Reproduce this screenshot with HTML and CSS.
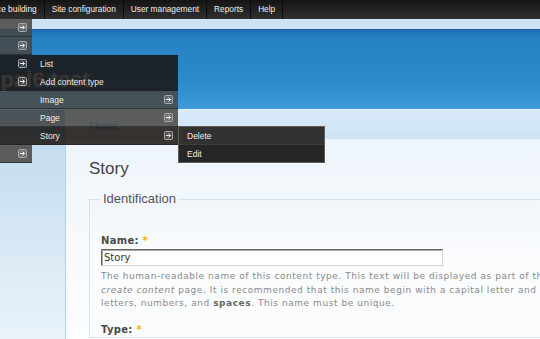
FILE: index.html
```html
<!DOCTYPE html>
<html>
<head>
  <title>Story | drupal6.test</title>
  <link rel="stylesheet" href="styles.css">
</head>
<body>
  <div class="admin-bar">
    <span class="admin-item first">ce building</span>
    <span class="admin-item">Site configuration</span>
    <span class="admin-item">User management</span>
    <span class="admin-item">Reports</span>
    <span class="admin-item">Help</span>
  </div>
  <div class="top-strip"></div>
  <div class="header">
    <h1 class="site-name">drupal6.test</h1>
  </div>

  <div class="main">
    <div class="sidebar"></div>
    <div class="center">
      <div class="breadcrumb"><a href="#">Home</a></div>
      <div class="content">
        <h2 class="title">Story</h2>
        <fieldset>
          <legend>Identification</legend>
          <div class="form-item">
            <label>Name: <span class="req">*</span></label>
            <input type="text" class="form-text" value="Story">
            <div class="description">
              The human-readable name of this content type. This text will be displayed as part of the list on the<br>
              <em>create content</em> page. It is recommended that this name begin with a capital letter and contain only<br>
              letters, numbers, and <strong>spaces</strong>. This name must be unique.
            </div>
          </div>
          <div class="form-item type-item">
            <label>Type: <span class="req">*</span></label>
          </div>
        </fieldset>
      </div>
    </div>
  </div>

  <ul class="menu menu-root">
    <li class="item"><span class="label"></span><svg class="arrow" width="9" height="9" viewBox="0 0 9 9"><rect x="0.5" y="0.5" width="8" height="8" rx="1"/><path d="M2 4.5h4.5M4.6 2.6l1.9 1.9-1.9 1.9"/></svg></li>
    <li class="item"><span class="label"></span><svg class="arrow" width="9" height="9" viewBox="0 0 9 9"><rect x="0.5" y="0.5" width="8" height="8" rx="1"/><path d="M2 4.5h4.5M4.6 2.6l1.9 1.9-1.9 1.9"/></svg></li>
    <li class="item dark"><span class="label"></span><svg class="arrow" width="9" height="9" viewBox="0 0 9 9"><rect x="0.5" y="0.5" width="8" height="8" rx="1"/><path d="M2 4.5h4.5M4.6 2.6l1.9 1.9-1.9 1.9"/></svg>
      <ul class="menu menu-sub">
        <li class="item dark"><span class="label">List</span></li>
        <li class="item dark"><span class="label">Add content type</span></li>
        <li class="item"><span class="label">Image</span><svg class="arrow" width="9" height="9" viewBox="0 0 9 9"><rect x="0.5" y="0.5" width="8" height="8" rx="1"/><path d="M2 4.5h4.5M4.6 2.6l1.9 1.9-1.9 1.9"/></svg></li>
        <li class="item"><span class="label">Page</span><svg class="arrow" width="9" height="9" viewBox="0 0 9 9"><rect x="0.5" y="0.5" width="8" height="8" rx="1"/><path d="M2 4.5h4.5M4.6 2.6l1.9 1.9-1.9 1.9"/></svg></li>
        <li class="item dark"><span class="label">Story</span><svg class="arrow" width="9" height="9" viewBox="0 0 9 9"><rect x="0.5" y="0.5" width="8" height="8" rx="1"/><path d="M2 4.5h4.5M4.6 2.6l1.9 1.9-1.9 1.9"/></svg>
          <ul class="menu menu-third">
            <li class="item"><span class="label">Delete</span></li>
            <li class="item"><span class="label">Edit</span></li>
          </ul>
        </li>
      </ul>
    </li>
    <li class="item dark"><span class="label"></span><svg class="arrow" width="9" height="9" viewBox="0 0 9 9"><rect x="0.5" y="0.5" width="8" height="8" rx="1"/><path d="M2 4.5h4.5M4.6 2.6l1.9 1.9-1.9 1.9"/></svg></li>
    <li class="item"><span class="label"></span></li>
    <li class="item"><span class="label"></span></li>
    <li class="item dark"><span class="label"></span></li>
    <li class="item"><span class="label"></span><svg class="arrow" width="9" height="9" viewBox="0 0 9 9"><rect x="0.5" y="0.5" width="8" height="8" rx="1"/><path d="M2 4.5h4.5M4.6 2.6l1.9 1.9-1.9 1.9"/></svg></li>
  </ul>
</body>
</html>
```

FILE: styles.css
```css
body {
  margin: 0;
  width: 540px;
  height: 339px;
  overflow: hidden;
  position: relative;
  font-family: "Liberation Sans", Arial, sans-serif;
  background: #e8f2f9;
}
.admin-bar {
  display: flex;
  height: 19px;
  background: linear-gradient(#141414, #303030);
  color: #f0f0f0;
  font-size: 8.3px;
  line-height: 19px;
  white-space: nowrap;
}
.admin-item {
  padding: 0 7px;
  border-right: 1px solid #0b0b0b;
}
.admin-item.first {
  padding-left: 0;
  margin-left: -3px;
}
.top-strip {
  height: 10px;
  background: #cee3f2;
  border-bottom: 1px solid #1b5c9c;
}
.header {
  height: 79px;
  background: linear-gradient(#1e6fb5, #2682c3 12%, #2b89c9 60%, #3e9ad9);
  border-bottom: 1px solid #e6f1fa;
  overflow: hidden;
}
.site-name {
  margin: 0 0 0 -35px;
  padding-top: 37px;
  font-size: 22px;
  line-height: 26px;
  font-weight: bold;
  color: #fff;
}
.main {
  display: flex;
}
.sidebar {
  width: 65px;
  flex: none;
  height: 229px;
  background: linear-gradient(#4a9bd6, #7fb6df 17px, #c4ddef 35px, #eaf3fa);
}
.center {
  flex: 1;
  min-width: 0;
}
.breadcrumb {
  height: 29px;
  box-sizing: border-box;
  padding: 10px 0 0 25px;
  background: linear-gradient(#d8eaf8, #cde3f4);
  font-size: 10.5px;
  line-height: 12px;
}
.breadcrumb a {
  color: #027ac6;
  text-decoration: none;
}
.content {
  height: 200px;
  padding: 20px 0 0 23px;
  border-left: 1px solid #b3d0e7;
  background: linear-gradient(#edf4fa, #f8fbfd 120px, #fbfdfe);
}
.title {
  margin: 0;
  font-size: 17px;
  line-height: 20px;
  font-weight: normal;
  color: #444;
}
fieldset {
  margin: 12px 0 0;
  padding: 0 0 0 11px;
  width: 700px;
  border: 1px solid #d6e3ee;
  background: linear-gradient(#f1f6fb, #fafcfe 60px);
}
legend {
  padding: 0 2px;
  font-size: 13px;
  line-height: 16px;
  color: #555;
}
.form-item {
  margin-top: 27px;
  font-family: "DejaVu Sans", Verdana, sans-serif;
}
.form-item label {
  display: block;
  font-size: 10px;
  line-height: 14px;
  font-weight: bold;
  letter-spacing: 0.3px;
  color: #494949;
}
.req {
  color: #ffae00;
}
.form-text {
  display: block;
  margin-top: 1px;
  width: 342px;
  height: 17px;
  box-sizing: border-box;
  padding: 0 2px;
  border: 1px solid;
  border-color: #666 #d6d6d6 #d6d6d6 #666;
  box-shadow: inset 1px 1px 0 #a8a8a8;
  background: #fff;
  font-family: "DejaVu Sans", Verdana, sans-serif;
  font-size: 10px;
  color: #333;
}
.description {
  margin-top: 4px;
  font-size: 9px;
  line-height: 13.6px;
  letter-spacing: 0.55px;
  color: #8a8a8a;
  white-space: nowrap;
}
.description strong {
  color: #666;
}
.type-item {
  margin-top: 12px;
}

/* admin menu dropdown */
.menu {
  list-style: none;
  margin: 0;
  padding: 0;
}
.menu-root {
  position: absolute;
  top: 19px;
  left: 0;
  width: 32px;
}
.item {
  position: relative;
  display: flex;
  align-items: center;
  justify-content: space-between;
  height: 18px;
  box-sizing: border-box;
  padding: 0 5px 0 8px;
  border-bottom: 1px solid rgba(30, 32, 34, 0.6);
  background: rgba(72, 70, 68, 0.86);
  color: #ececec;
  font-size: 8.5px;
  white-space: nowrap;
}
.item.dark {
  background: rgba(27, 20, 15, 0.86);
}
.arrow {
  flex: none;
  fill: rgba(255, 255, 255, 0.14);
  stroke: #a6aaae;
  stroke-width: 1;
}
.arrow path {
  fill: none;
  stroke: #f2f2f2;
}
.menu-sub {
  position: absolute;
  top: 0;
  left: 32px;
  width: 146px;
}
.menu-third {
  position: absolute;
  top: -1px;
  left: 146px;
  width: 145px;
  border: 1px solid #5c5c5c;
  background: #2a2a2a;
}
.menu-third .item {
  background: #323232;
  border-bottom-color: #3e3e3e;
}
.menu-third .item + .item {
  background: #262626;
  border-bottom: none;
  height: 17px;
}
```
